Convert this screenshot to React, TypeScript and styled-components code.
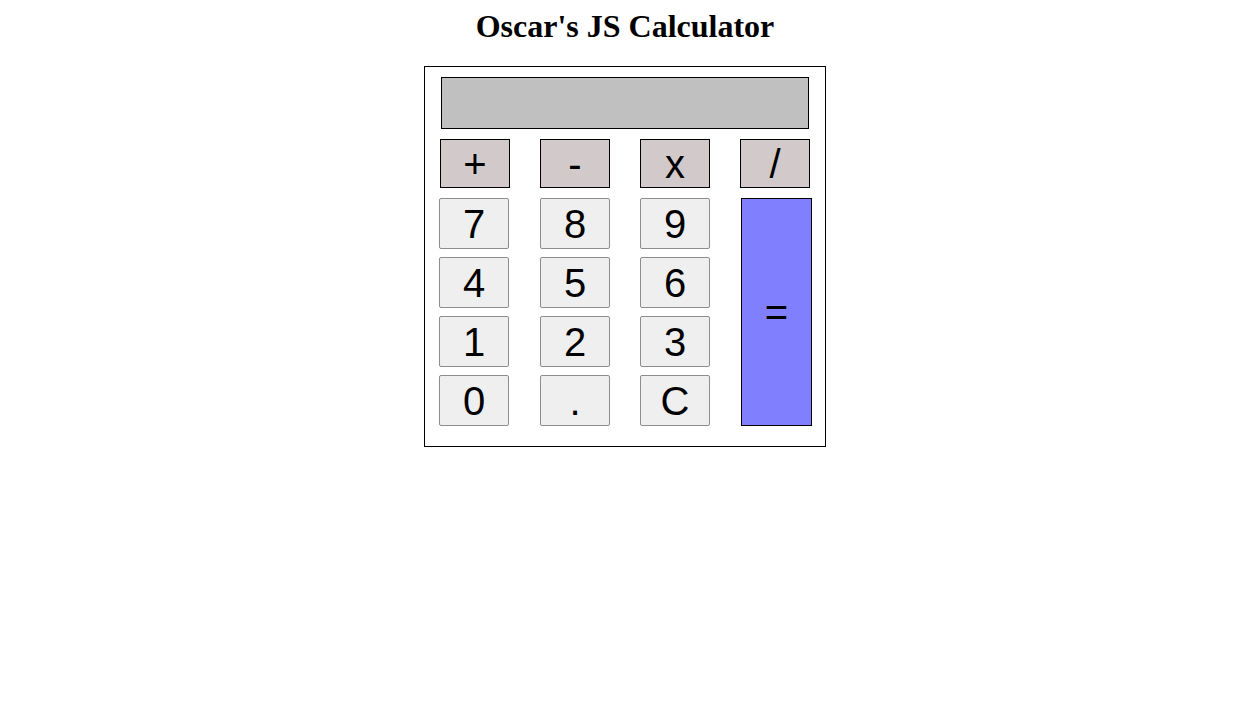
import React, { useState } from "react";
import styled, { createGlobalStyle } from "styled-components";

const GlobalStyle = createGlobalStyle`
  body {
    margin: 8px;
    background: #ffffff;
    font-family: "Liberation Serif", "Times New Roman", serif;
  }
`;

const Page = styled.div`
  display: flex;
  flex-direction: column;
  align-items: center;
  padding-left: 4px;
`;

const Title = styled.h1`
  margin: 0 0 22px;
  font-size: 32px;
  font-weight: bold;
  color: #000;
  line-height: 36px;
`;

const Calculator = styled.div`
  width: 372px;
  padding: 10px 14px 20px 14px;
  border: 1px solid #000;
`;

const Display = styled.div`
  box-sizing: border-box;
  width: 368px;
  height: 52px;
  margin-left: 2px;
  background: #c0c0c0;
  border: 1px solid #000;
  font-family: "Liberation Sans", Arial, sans-serif;
  font-size: 36px;
  line-height: 50px;
  text-align: right;
  padding: 0 8px;
  overflow: hidden;
`;

const OperatorRow = styled.div`
  display: grid;
  grid-template-columns: repeat(4, 70px);
  column-gap: 30px;
  margin: 10px 0 0 1px;
`;

const Keypad = styled.div`
  display: grid;
  grid-template-columns: 101px 100px 101px 71px;
  grid-template-rows: repeat(4, 51px);
  row-gap: 8px;
  margin-top: 10px;
`;

const Key = styled.button`
  box-sizing: border-box;
  width: 70px;
  height: 51px;
  padding: 0;
  margin: 0;
  background: #efefef;
  border: 1px solid #8d8d8d;
  border-radius: 2px;
  color: #000;
  font-family: "Liberation Sans", Arial, sans-serif;
  font-size: 40px;
  line-height: 1;
  cursor: pointer;
`;

const OperatorKey = styled(Key)`
  height: 49px;
  background: #d2caca;
  border-color: #000;
  border-radius: 0;
`;

const EqualsKey = styled(Key)`
  grid-column: 4;
  grid-row: 1 / span 4;
  width: 71px;
  height: 228px;
  background: #8080ff;
  border-color: #000;
  border-radius: 0;
`;

const digitRows = [
  ["7", "8", "9"],
  ["4", "5", "6"],
  ["1", "2", "3"],
  ["0", ".", "C"],
];

const operators = ["+", "-", "x", "/"];

export default function App() {
  const [value, setValue] = useState("");

  const press = (k: string) => {
    if (k === "C") {
      setValue("");
      return;
    }
    setValue((v) => v + k);
  };

  const evaluate = () => {
    try {
      const expr = value.replace(/x/g, "*");
      if (!/^[0-9+\-*/.]+$/.test(expr)) return;
      // eslint-disable-next-line no-new-func
      const result = Function(`return (${expr})`)();
      setValue(String(result));
    } catch {
      setValue("");
    }
  };

  return (
    <>
      <GlobalStyle />
      <Page>
        <Title>Oscar's JS Calculator</Title>
        <Calculator>
          <Display>{value}</Display>
          <OperatorRow>
            {operators.map((op) => (
              <OperatorKey key={op} onClick={() => press(op)}>
                {op}
              </OperatorKey>
            ))}
          </OperatorRow>
          <Keypad>
            {digitRows.map((row, r) =>
              row.map((k, c) => (
                <Key
                  key={k}
                  style={{ gridRow: r + 1, gridColumn: c + 1 }}
                  onClick={() => press(k)}
                >
                  {k}
                </Key>
              ))
            )}
            <EqualsKey onClick={evaluate}>=</EqualsKey>
          </Keypad>
        </Calculator>
      </Page>
    </>
  );
}
